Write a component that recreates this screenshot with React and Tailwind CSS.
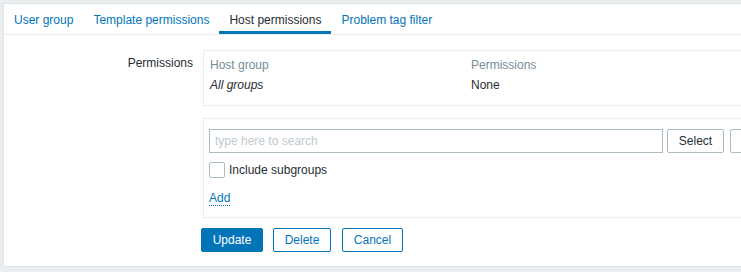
export default function App() {
  const tabs = ['User group', 'Template permissions', 'Host permissions', 'Problem tag filter'];
  const active = 'Host permissions';

  return (
    <div className="w-[741px] h-[272px] overflow-hidden bg-[#ebeef0] pt-[3px] pl-[3px] text-[12px] text-[#1f2c33]" style={{ fontFamily: '"Liberation Sans", Arial, sans-serif' }}>
      <div className="w-[760px] h-[264px] bg-white border border-[#dfe4e7] border-r-0">
        <ul className="flex h-[31px] border-b border-[#ebeef0]">
          {tabs.map((t) => (
            <li
              key={t}
              className={
                t === active
                  ? 'px-[10px] pt-[7px] border-b-[3px] border-[#0275b8] text-[#1f2c33]'
                  : 'px-[10px] pt-[7px] text-[#0275b8]'
              }
            >
              {t}
            </li>
          ))}
        </ul>

        <div className="flex pt-[15px]">
          <div className="w-[199px] shrink-0 text-right pr-[10px] pt-[4px]">Permissions</div>
          <div className="flex-1 min-w-0">
            <div className="border border-[#ebeef0] h-[56px] px-[6px] pt-[5px]">
              <div className="grid grid-cols-[261px_1fr] text-[#768d99] h-[18px] leading-[18px]">
                <span>Host group</span>
                <span>Permissions</span>
              </div>
              <div className="grid grid-cols-[261px_1fr] h-[22px] leading-[22px]">
                <span className="italic">All groups</span>
                <span>None</span>
              </div>
            </div>

            <div className="mt-[12px] border border-[#ebeef0] h-[100px] px-[5px] pt-[10px]">
              <div className="flex gap-[4px]">
                <input
                  className="w-[454px] shrink-0 h-[24px] border border-[#acbbc2] px-[5px] text-[12px] outline-none placeholder:text-[#bfc9ce]"
                  placeholder="type here to search"
                  style={{ fontFamily: '"Liberation Sans", Arial, sans-serif' }}
                />
                <button className="w-[57px] shrink-0 h-[24px] border border-[#acbbc2] rounded-[2px] bg-white text-[#1f2c33]">Select</button>
                <button className="w-[57px] shrink-0 h-[24px] border border-[#acbbc2] rounded-[2px] bg-white ml-[2px]"></button>
              </div>
              <label className="flex items-center mt-[9px] h-[16px]">
                <span className="w-[16px] h-[16px] border border-[#acbbc2] rounded-[2px] bg-white"></span>
                <span className="ml-[4px]">Include subgroups</span>
              </label>
              <div className="mt-[11px]">
                <span className="text-[#0275b8] border-b border-dotted border-[#0275b8] leading-[14px] inline-block">Add</span>
              </div>
            </div>
          </div>
        </div>

        <div className="flex gap-[10px] pl-[197px] mt-[10px]">
          <button className="w-[62px] h-[24px] bg-[#0275b8] text-white rounded-[2px] border border-[#0275b8]">Update</button>
          <button className="w-[58px] h-[24px] bg-white text-[#0275b8] rounded-[2px] border border-[#0275b8]">Delete</button>
          <button className="w-[61px] h-[24px] bg-white text-[#0275b8] rounded-[2px] border border-[#0275b8] ml-[1px]">Cancel</button>
        </div>
      </div>
    </div>
  );
}
